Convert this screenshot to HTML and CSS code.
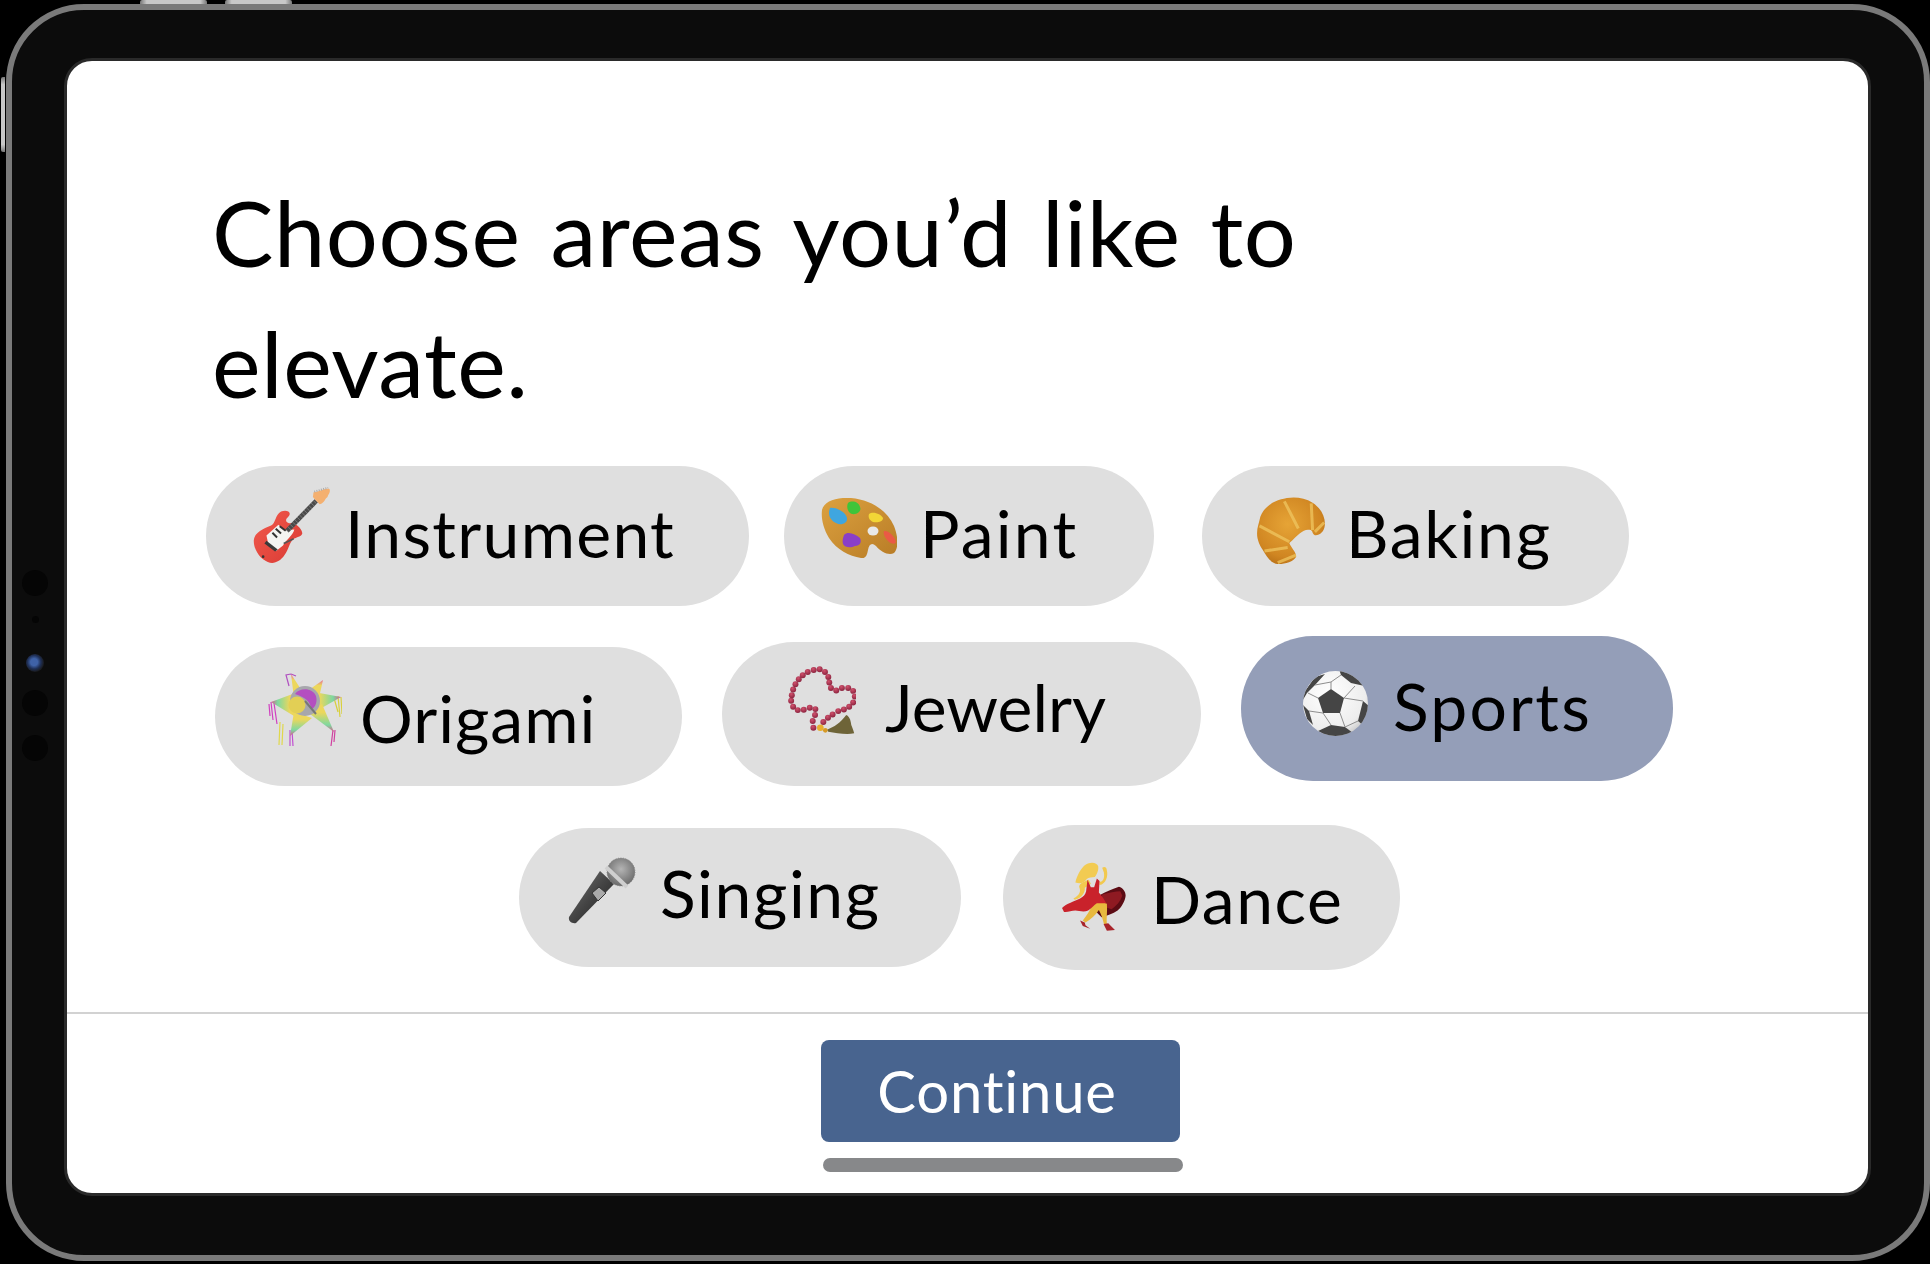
FILE: index.html
```html
<!DOCTYPE html>
<html lang="en">
<head>
<meta charset="utf-8">
<title>Choose areas</title>
<link rel="stylesheet" href="styles.css">
</head>
<body>
<div class="tablet">
  <span class="hw hw-top-a"></span>
  <span class="hw hw-top-b"></span>
  <span class="hw-side"></span>
  <span class="sensor s1"></span>
  <span class="sensor s2"></span>
  <span class="camera"></span>
  <span class="sensor s4"></span>
  <span class="sensor s5"></span>
  <main class="screen">
    <section class="content">
      <h1 class="title">Choose areas you’d like to elevate.</h1>
      <div class="row row-1">
        <button class="pill p-instrument">
          <svg class="emoji e-guitar" viewBox="35 20 240 235">
            <defs><linearGradient id="gr" x1="0" y1="0" x2="1" y2="1"><stop offset="0" stop-color="#f25a4c"/><stop offset="1" stop-color="#d93a34"/></linearGradient></defs>
            <path d="M40 180C42 158 66 146 92 136C106 130 104 104 122 94C134 88 150 92 148 102C146 112 134 114 138 124C142 130 150 130 160 128C172 136 186 148 186 160C184 170 168 170 158 178C146 190 146 206 132 226C120 244 100 254 82 246C60 238 38 208 40 180Z" fill="url(#gr)"/>
            <path d="M78 166L114 134L130 150L162 148C158 166 136 180 128 196L108 212L84 194Z" fill="#f4f4f2"/>
            <path d="M140 152L228 62" stroke="#4a4a4a" stroke-width="14"/>
            <path d="M140 152L228 62" stroke="#a8a8a8" stroke-width="14" stroke-dasharray="1 9"/>
            <path d="M220 36C236 36 252 22 268 26C272 36 264 42 262 50C254 54 254 68 238 72C230 62 224 58 218 50Z" fill="#f4b070"/>
            <path d="M222 34L264 22" stroke="#aaa" stroke-width="6" stroke-dasharray="3 4"/>
            <path d="M106 146L122 160M118 138L136 152M96 158L110 172" stroke="#333" stroke-width="6"/>
            <path d="M78 182L112 208L104 214L72 190Z" fill="#3a3a3a"/>
            <path d="M130 190L160 176" stroke="#555" stroke-width="5"/>
            <circle cx="68" cy="230" r="4" fill="#333"/>
          </svg>
          <span class="label">Instrument</span>
        </button>
        <button class="pill p-paint">
          <svg class="emoji e-palette" viewBox="0 0 76 60">
            <defs><linearGradient id="wd" x1="0" y1="0" x2="1" y2="1"><stop offset="0" stop-color="#dca13f"/><stop offset="1" stop-color="#b87c26"/></linearGradient></defs>
            <path d="M1 12C3 3 16 -1 30 0C50 2 66 12 73 28C77 38 78 50 73 55C68 58 60 54 55 48C51 44 48 46 47 52C46 58 44 61 40 60C28 58 16 52 8 40C2 30 0 20 1 12Z" fill="url(#wd)"/>
            <path d="M9 10C15 9 25 14 26 20C27 25 20 28 15 25C10 23 6 17 9 10Z" fill="#3fa6e0"/>
            <path d="M27 5C31 2 38 4 39 9C41 13 36 17 31 16C27 15 25 9 27 5Z" fill="#3fc43a"/>
            <path d="M48 16C52 13 60 16 62 20C62 24 56 25 52 24C48 22 47 19 48 16Z" fill="#f2d636"/>
            <path d="M63 33C67 32 74 38 75 44C74 47 70 46 67 43C64 40 62 36 63 33Z" fill="#ea5a45"/>
            <path d="M23 37C27 33 34 36 39 40C41 44 39 48 34 48C30 50 24 50 22 46C21 43 22 40 23 37Z" fill="#8a3fc8"/>
            <ellipse cx="52" cy="33" rx="5.500" ry="4.500" fill="#e8e8e8"/>
          </svg>
          <span class="label">Paint</span>
        </button>
        <button class="pill p-baking">
          <svg class="emoji e-croissant" viewBox="45 45 210 205">
            <defs><radialGradient id="cr" cx=".45" cy=".4" r=".7"><stop offset="0" stop-color="#e6a436"/><stop offset=".7" stop-color="#d08622"/><stop offset="1" stop-color="#b06a14"/></radialGradient></defs>
            <path d="M55 115C60 85 85 62 120 52C145 44 185 42 215 62C240 78 254 105 252 130C250 150 235 162 222 160C212 156 218 146 206 144C188 140 172 158 145 184C150 198 168 214 165 226C158 240 130 248 110 247C90 245 76 225 65 205C55 190 46 170 48 150C48 138 52 128 55 115Z" fill="url(#cr)"/>
            <path d="M130 58L172 140M211 64L215 145M55 132L145 180M70 208L140 197M110 243L165 220M222 150L250 122" stroke="#efc560" stroke-opacity=".75" stroke-width="9" fill="none"/>
          </svg>
          <span class="label">Baking</span>
        </button>
      </div>
      <div class="row row-2">
        <button class="pill p-origami">
          <svg class="emoji e-pinata" viewBox="0 0 74 75">
            <defs>
              <linearGradient id="sp" x1="0" y1="0" x2="0" y2="1"><stop offset="0" stop-color="#e86a98"/><stop offset=".25" stop-color="#ecd75c"/><stop offset=".7" stop-color="#ecd75c"/><stop offset="1" stop-color="#6fd6a0"/></linearGradient>
              <linearGradient id="sd" x1="0" y1="1" x2="0" y2="0"><stop offset="0" stop-color="#d85a8a"/><stop offset=".25" stop-color="#7ed8a0"/><stop offset=".7" stop-color="#ecd75c"/></linearGradient>
              <linearGradient id="sq" x1="0" y1="0" x2="1" y2="0"><stop offset="0" stop-color="#d65a8a"/><stop offset=".25" stop-color="#7ed8a0"/><stop offset=".7" stop-color="#ecd75c"/></linearGradient>
              <linearGradient id="sr" x1="1" y1="0" x2="0" y2="0"><stop offset="0" stop-color="#d65a8a"/><stop offset=".3" stop-color="#7ed8a0"/><stop offset=".8" stop-color="#ecd75c"/></linearGradient>
            </defs>
            <path d="M3 30L5 48M6 31L9 52M1 32L2 44" stroke="#d040c0" stroke-width="1.200"/>
            <path d="M70 24L72 45M73 25L74 42M66 26L70 40" stroke="#d8d03c" stroke-width="1.200"/>
            <path d="M12 50L11 73M15 52L14 73" stroke="#e0d84c" stroke-width="1.200"/>
            <path d="M22 58L22 74M24 58L25 74" stroke="#c050d0" stroke-width="1.200"/>
            <path d="M65 58L63 74M67 58L66 70" stroke="#d040a0" stroke-width="1.200"/>
            <path d="M23 2L18 3L21 14M23 2L28 4" stroke="#b050c0" stroke-width="1.200" fill="none"/>
            <path d="M23 2L36 22L26 26Z" fill="url(#sp)"/>
            <path d="M55 8L38 20L50 30Z" fill="url(#sp)"/>
            <path d="M73 25L46 20L50 38Z" fill="url(#sr)"/>
            <path d="M66 60L42 42L54 32Z" fill="url(#sd)"/>
            <path d="M22 64L26 40L44 46Z" fill="url(#sd)"/>
            <path d="M3 30L30 20L26 44Z" fill="url(#sq)"/>
            <circle cx="37" cy="29" r="15" fill="#a7a7ac"/>
            <path d="M27 22C32 15 45 16 48 24C50 31 46 37 43 37C43 30 37 25 27 22Z" fill="#b44fc0"/>
            <circle cx="29" cy="33" r="8.500" fill="#e2cf55"/>
            <path d="M37 29L48 42" stroke="#777" stroke-width="2"/>
          </svg>
          <span class="label">Origami</span>
        </button>
        <button class="pill p-jewelry">
          <svg class="emoji e-beads" viewBox="48 42 207 205">
            <defs><radialGradient id="bd" cx=".4" cy=".3" r=".7"><stop offset="0" stop-color="#d0506c"/><stop offset="1" stop-color="#8c2540"/></radialGradient></defs>
            <path d="M168 234C190 226 208 214 226 190C232 192 238 200 240 212C240 222 248 232 250 245C226 250 196 244 172 240Z" fill="#6e6438"/>
            <g fill="url(#bd)">
              <circle cx="127" cy="228" r="9"/><circle cx="125" cy="208" r="9"/><circle cx="132" cy="190" r="9"/><circle cx="133" cy="172" r="9"/><circle cx="116" cy="168" r="9"/><circle cx="98" cy="174" r="9"/><circle cx="80" cy="175" r="9"/><circle cx="66" cy="165" r="9"/><circle cx="60" cy="147" r="9"/><circle cx="62" cy="130" r="9"/><circle cx="66" cy="113" r="9"/><circle cx="73" cy="97" r="9"/><circle cx="83" cy="82" r="9"/><circle cx="95" cy="70" r="9"/><circle cx="110" cy="60" r="9"/><circle cx="128" cy="54" r="9"/><circle cx="146" cy="52" r="9"/><circle cx="162" cy="60" r="9"/><circle cx="172" cy="75" r="9"/><circle cx="175" cy="92" r="9"/><circle cx="180" cy="108" r="9"/><circle cx="196" cy="116" r="9"/><circle cx="213" cy="108" r="9"/><circle cx="232" cy="108" r="9"/><circle cx="247" cy="117" r="9"/><circle cx="252" cy="134" r="9"/><circle cx="247" cy="152" r="9"/><circle cx="235" cy="165" r="9"/><circle cx="219" cy="173" r="9"/><circle cx="202" cy="178" r="9"/><circle cx="185" cy="188" r="9"/><circle cx="171" cy="198" r="9"/><circle cx="157" cy="211" r="9"/>
            </g>
            <circle cx="148" cy="228" r="10" fill="#e8ae2e"/>
            <circle cx="163" cy="236" r="7" fill="#d69a26"/>
          </svg>
          <span class="label">Jewelry</span>
        </button>
        <button class="pill pill-active p-sports">
          <svg class="emoji e-ball" viewBox="0 0 65 65">
            <defs>
              <radialGradient id="bl" cx=".4" cy=".35" r=".75"><stop offset="0" stop-color="#fff"/><stop offset=".75" stop-color="#ededed"/><stop offset="1" stop-color="#bdbdbd"/></radialGradient>
              <clipPath id="bc"><circle cx="32.500" cy="32.500" r="32.500"/></clipPath>
            </defs>
            <circle cx="32.500" cy="32.500" r="32.500" fill="url(#bl)"/>
            <g clip-path="url(#bc)">
              <path d="M28 18L41 27L37 42L20 42L15 27Z" fill="#454545"/>
              <path d="M36 -2L55 4L66 16L48 12L38 4Z" fill="#454545"/>
              <path d="M12 6L2 20L-2 32L4 22L12 14L22 3Z" fill="#454545"/>
              <path d="M60 30L67 36L62 56L55 50Z" fill="#454545"/>
              <path d="M15 60L28 54L42 56L50 62L32 70Z" fill="#454545"/>
              <path d="M0 34L4 48L10 54L6 40Z" fill="#454545"/>
              <path d="M28 18L28 11M41 27L52 15M41 27L60 30M37 42L42 56M20 42L28 54M15 27L5 22M20 42L6 40M12 14L28 11L38 4M55 50L42 56" stroke="#8d8d8d" stroke-width="1" fill="none"/>
            </g>
          </svg>
          <span class="label">Sports</span>
        </button>
      </div>
      <div class="row row-3">
        <button class="pill p-singing">
          <svg class="emoji e-mic" viewBox="0 0 68 67">
            <defs>
              <linearGradient id="mh" x1="0" y1="0" x2="1" y2="1"><stop offset="0" stop-color="#777"/><stop offset=".5" stop-color="#444"/><stop offset="1" stop-color="#1c1c1c"/></linearGradient>
              <radialGradient id="mg" cx=".5" cy=".4" r=".6"><stop offset="0" stop-color="#b4b4b4"/><stop offset="1" stop-color="#6a6a6a"/></radialGradient>
            </defs>
            <path d="M1 60L32 14L46 27L8 66C4 67 0 64 1 60Z" fill="url(#mh)"/>
            <path d="M24 36L31 30L38 36L30 44Z" fill="#aaa" stroke="#333"/>
            <circle cx="53" cy="15" r="14" fill="url(#mg)"/>
            <circle cx="53" cy="15" r="14" fill="none" stroke="#888" stroke-width="1" stroke-dasharray="1 1.500"/>
            <path d="M38 10L59 30" stroke="#cfcfcf" stroke-width="4"/>
          </svg>
          <span class="label">Singing</span>
        </button>
        <button class="pill p-dance">
          <svg class="emoji e-dancer" viewBox="35 25 200 215">
            <path d="M150 130C168 120 190 112 208 105C220 108 228 120 228 132C226 150 214 168 204 176C190 186 172 192 156 196L130 170Z" fill="#5c0c14"/>
            <path d="M158 128C178 122 198 118 212 118L218 132C212 150 200 162 186 172L150 160Z" fill="#8f1a22"/>
            <path d="M128 160C140 150 160 148 172 156C174 178 170 200 172 220L164 220C160 200 154 184 148 174C138 190 124 202 108 212L100 206C112 190 120 178 128 160Z" fill="#e8b93e"/>
            <path d="M92 206L100 222L122 230L108 220L106 212Z" fill="#a8242a"/>
            <path d="M162 216L176 214L196 234L172 236Z" fill="#a8242a"/>
            <path d="M150 90C160 90 166 80 163 62L158 48C166 42 172 48 172 56C176 72 170 96 150 100Z" fill="#f2c94f"/>
            <path d="M118 84C100 90 86 98 90 108C94 118 92 130 72 140L76 144C96 140 108 122 106 108C112 104 120 100 124 96Z" fill="#f2c94f"/>
            <path d="M114 84L124 106L134 106L142 80L150 88L148 122C158 134 166 146 170 154L142 154C134 158 126 170 116 176C102 182 88 176 78 176C66 176 54 182 44 180L38 168C50 156 76 148 92 140C102 134 108 128 110 118Z" fill="#c9222b"/>
            <path d="M78 92C82 70 96 50 104 42C118 30 142 30 146 44C148 56 142 68 136 76C126 78 118 76 112 82C102 96 90 96 78 92Z" fill="#f2cb52"/>
          </svg>
          <span class="label">Dance</span>
        </button>
      </div>
    </section>
    <footer class="footer">
      <button class="continue">Continue</button>
      <span class="home-bar"></span>
    </footer>
  </main>
</div>
</body>
</html>
```
FILE: styles.css
```css
* { box-sizing: border-box; }
html, body { margin: 0; height: 100%; background: #000; overflow: hidden; }
body { padding: 4px 0 0 6px; font-family: Lato, "Noto Sans", sans-serif; font-variant-ligatures: none; color: #000; }

.tablet {
  position: relative;
  width: 1924px;
  height: 1257px;
  padding: 48px 53px 59px 52px;
  background: #0c0c0c;
  border: 6px solid #7a7a7a;
  border-radius: 78px;
}
.hw { position: absolute; top: -10px; height: 4px; background: linear-gradient(90deg, #777, #c8c8c8 10%, #c8c8c8 90%, #777); border-radius: 2px 2px 0 0; }
.hw-top-a { left: 128px; width: 67px; }
.hw-top-b { left: 213px; width: 67px; }
.hw-side { position: absolute; left: -11px; top: 67px; width: 4px; height: 75px; background: linear-gradient(180deg, #777, #c8c8c8 10%, #c8c8c8 90%, #777); border-radius: 2px 0 0 2px; }
.sensor { position: absolute; left: 10px; width: 26px; height: 26px; border-radius: 50%; background: #050505; }
.s1 { top: 560px; }
.s2 { left: 20px; top: 606px; width: 7px; height: 7px; }
.s4 { top: 680px; }
.s5 { top: 725px; }
.camera { position: absolute; left: 14px; top: 644px; width: 18px; height: 18px; border-radius: 50%; background: radial-gradient(circle at 45% 45%, #3f62a8 0 25%, #1f3058 48%, #1a1c22 68%, #101010); }

.screen {
  display: flex;
  flex-direction: column;
  height: 100%;
  background: #fff;
  border: 3px solid #2a2a2a;
  border-radius: 28px;
  overflow: hidden;
}
.content { height: 951px; padding-top: 105px; }
.title {
  width: 1150px;
  margin: 0 0 38px 145px;
  font-size: 92px;
  font-weight: 400;
  line-height: 131px;
  letter-spacing: 0.5px;
  word-spacing: 6px;
}

.row { display: flex; align-items: flex-start; }
.row-1 { padding-left: 139px; height: 170px; }
.row-2 { padding-left: 148px; height: 189px; }
.row-3 { padding-left: 452px; }

.pill {
  display: flex;
  flex: none;
  align-items: center;
  padding: 0;
  font: inherit;
  font-size: 66px;
  line-height: 1;
  color: #000;
  background: #dfdfdf;
  border: 0;
  border-radius: 72px;
  text-align: left;
}
.pill-active { background: #949eb8; }
.emoji { flex: none; display: block; }
.label { display: block; white-space: nowrap; }

.p-instrument { width: 543px; height: 140px; padding-left: 46px; gap: 13px; margin-right: 35px; }
.e-guitar { width: 80px; height: 78px; margin-top: -20px; }
.p-instrument .label { margin-bottom: 7px; letter-spacing: 1.300px; }

.p-paint { width: 370px; height: 140px; padding-left: 37px; gap: 23px; margin-right: 48px; }
.e-palette { width: 76px; height: 60px; margin-top: -17px; }
.p-paint .label { margin-bottom: 7px; letter-spacing: 2.200px; }

.p-baking { width: 427px; height: 140px; padding-left: 54px; gap: 20px; }
.e-croissant { width: 70px; height: 68px; margin-top: -10px; }
.p-baking .label { margin-bottom: 7px; letter-spacing: 1.700px; }

.p-origami { width: 467px; height: 139px; margin-top: 11px; margin-right: 40px; padding-left: 53px; gap: 18px; }
.e-pinata { width: 74px; height: 75px; margin-top: -15px; }
.p-origami .label { margin-bottom: -3px; letter-spacing: 1px; }

.p-jewelry { width: 479px; height: 144px; margin-top: 6px; margin-right: 40px; padding-left: 65px; gap: 29px; }
.e-beads { width: 69px; height: 68px; margin-top: -29px; }
.p-jewelry .label { margin-bottom: 15px; }

.p-sports { width: 432px; height: 145px; padding-left: 62px; gap: 25px; }
.e-ball { width: 65px; height: 65px; margin-top: -10px; }
.p-sports .label { margin-bottom: 5px; letter-spacing: 2.200px; }

.p-singing { width: 442px; height: 139px; margin-top: 3px; margin-right: 42px; padding-left: 49px; gap: 24px; }
.e-mic { width: 68px; height: 67px; margin-top: -15px; }
.p-singing .label { margin-bottom: 9px; letter-spacing: 1.600px; }

.p-dance { width: 397px; height: 145px; padding-left: 58px; gap: 23px; }
.e-dancer { width: 67px; height: 72px; margin-top: -4px; }
.p-dance .label { margin-bottom: -3px; letter-spacing: 1.500px; }

.footer { display: flex; flex: 1; flex-direction: column; padding-left: 754px; border-top: 2px solid #d2d2d2; }
.continue {
  width: 359px;
  height: 102px;
  margin-top: 26px;
  padding: 0 7px 0 0;
  font: inherit;
  font-size: 58px;
  line-height: 1;
  letter-spacing: 0.800px;
  color: #fff;
  background: #48648f;
  border: 0;
  border-radius: 8px;
}
.home-bar { width: 360px; height: 14px; margin: 16px 0 0 2px; background: #87888a; border-radius: 7px; }
```
